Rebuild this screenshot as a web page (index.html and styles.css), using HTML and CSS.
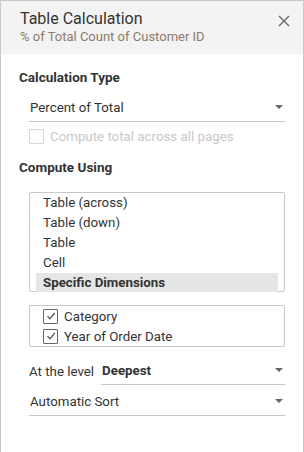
FILE: index.html
```html
<!DOCTYPE html>
<html lang="en">
<head>
    <meta charset="UTF-8">
    <title>Table Calculation</title>
    <link rel="stylesheet" href="styles.css">
</head>
<body>
    <div class="dialog">
        <div class="header">
            <div class="titles">
                <div class="title">Table Calculation</div>
                <div class="subtitle">% of Total Count of Customer ID</div>
            </div>
            <svg class="close" width="12" height="12" viewBox="0 0 12 12">
                <path d="M1 1L11 11M11 1L1 11" stroke="#666" stroke-width="1.3" fill="none"/>
            </svg>
        </div>

        <div class="body">
            <div class="section-title">Calculation Type</div>
            <div class="dropdown">
                <span>Percent of Total</span>
                <span class="arrow"></span>
            </div>
            <label class="check disabled">
                <span class="box"></span>
                <span>Compute total across all pages</span>
            </label>

            <div class="section-title second">Compute Using</div>
            <div class="listbox">
                <div class="item">Table (across)</div>
                <div class="item">Table (down)</div>
                <div class="item">Table</div>
                <div class="item">Cell</div>
                <div class="item selected">Specific Dimensions</div>
            </div>

            <div class="dims">
                <label class="check">
                    <span class="box checked">
                        <svg width="10" height="10" viewBox="0 0 10 10"><path d="M1.5 5.2L4 7.8L8.7 2" stroke="#555" stroke-width="1.3" fill="none"/></svg>
                    </span>
                    <span>Category</span>
                </label>
                <label class="check">
                    <span class="box checked">
                        <svg width="10" height="10" viewBox="0 0 10 10"><path d="M1.5 5.2L4 7.8L8.7 2" stroke="#555" stroke-width="1.3" fill="none"/></svg>
                    </span>
                    <span>Year of Order Date</span>
                </label>
            </div>

            <div class="level-row">
                <span class="level-label">At the level</span>
                <div class="dropdown level">
                    <span class="strong">Deepest</span>
                    <span class="arrow"></span>
                </div>
            </div>

            <div class="dropdown sort">
                <span>Automatic Sort</span>
                <span class="arrow"></span>
            </div>
        </div>
    </div>
</body>
</html>
```

FILE: styles.css
```css
body {
    margin: 0;
    font-family: Roboto, "Liberation Sans", Arial, sans-serif;
    color: #333;
    background: #fff;
}
.dialog {
    width: 304px;
    height: 452px;
    box-sizing: border-box;
    border: 1px solid #c8c8c8;
    border-bottom: none;
    background: #fff;
}
.header {
    display: flex;
    justify-content: space-between;
    align-items: flex-start;
    background: #f3f3f3;
    height: 53px;
    padding: 8px 13px 0 19px;
    box-sizing: border-box;
}
.title {
    font-size: 16px;
    color: #333;
    line-height: 20px;
}
.subtitle {
    font-size: 13px;
    color: #8d7b6a;
    line-height: 16px;
}
.close {
    margin-top: 6px;
}
.body {
    padding: 15px 18px 0 18px;
}
.section-title {
    font-size: 13.5px;
    font-weight: bold;
    color: #333;
    line-height: 16px;
}
.section-title.second {
    margin-top: 13px;
}
.dropdown {
    display: flex;
    justify-content: space-between;
    align-items: center;
    border-bottom: 1px solid #c8c8c8;
    height: 28px;
    margin: 8px 0 0 10px;
    padding: 0 2px 0 1px;
    font-size: 13.3px;
    color: #333;
}
.arrow {
    width: 0;
    height: 0;
    border-left: 4px solid transparent;
    border-right: 4px solid transparent;
    border-top: 4px solid #666;
}
.strong {
    font-weight: bold;
}
.check {
    display: flex;
    align-items: center;
    gap: 6px;
    font-size: 13.3px;
    height: 20px;
}
.check.disabled {
    color: #c8c8c8;
    margin: 4px 0 0 10px;
}
.box {
    width: 13px;
    height: 13px;
    border: 1px solid #bbb;
    border-radius: 1px;
    display: flex;
    align-items: center;
    justify-content: center;
}
.check.disabled .box {
    border-color: #d5d5d5;
}
.box.checked {
    border-color: #666;
}
.listbox {
    margin: 17px 0 0 10px;
    border: 1px solid #c8c8c8;
    border-radius: 2px;
    height: 100px;
    box-sizing: border-box;
    padding: 0 6px;
}
.item {
    height: 20px;
    line-height: 20px;
    padding-left: 7px;
    font-size: 13.3px;
}
.item.selected {
    background: #e6e6e6;
    font-weight: bold;
    height: 19px;
    line-height: 19px;
}
.dims {
    margin: 13px 0 0 10px;
    border: 1px solid #c8c8c8;
    border-radius: 2px;
    height: 42px;
    box-sizing: border-box;
    padding: 0 13px;
}
.level-row {
    display: flex;
    align-items: flex-end;
    margin-left: 10px;
}
.level-label {
    font-size: 13.3px;
    padding-bottom: 6px;
    white-space: nowrap;
}
.dropdown.level {
    flex: 1;
    margin: 9px 0 0 7px;
}
.dropdown.sort {
    margin-top: 2px;
}
```
